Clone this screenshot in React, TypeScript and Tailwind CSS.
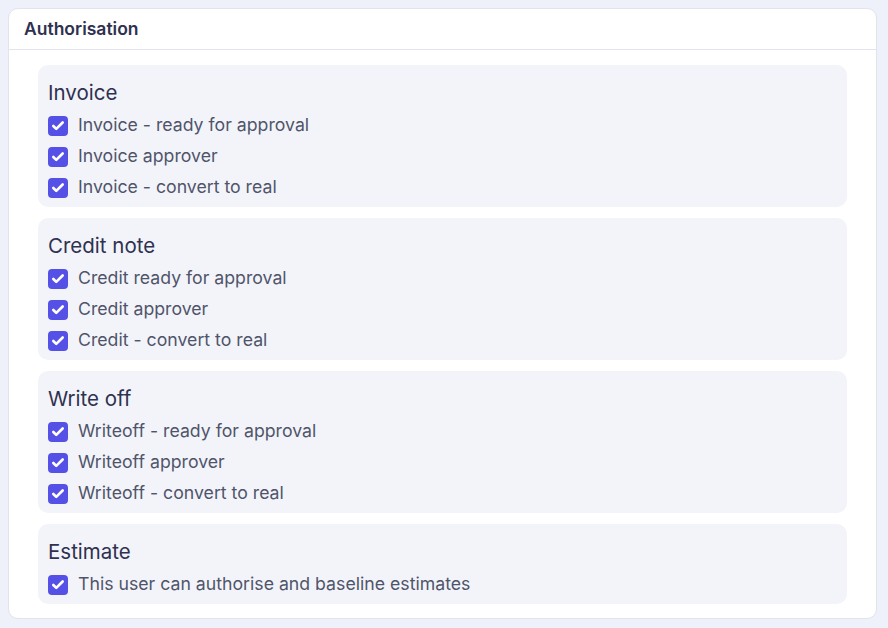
import { Check } from 'lucide-react';

type Group = { title: string; items: string[] };

const groups: Group[] = [
  {
    title: 'Invoice',
    items: ['Invoice - ready for approval', 'Invoice approver', 'Invoice - convert to real'],
  },
  {
    title: 'Credit note',
    items: ['Credit ready for approval', 'Credit approver', 'Credit - convert to real'],
  },
  {
    title: 'Write off',
    items: ['Writeoff - ready for approval', 'Writeoff approver', 'Writeoff - convert to real'],
  },
  {
    title: 'Estimate',
    items: ['This user can authorise and baseline estimates'],
  },
];

function Checkbox() {
  return (
    <span className="flex h-5 w-5 shrink-0 items-center justify-center rounded-[4px] bg-[#5550e6]">
      <Check className="h-[14px] w-[14px] text-white" strokeWidth={4.5} />
    </span>
  );
}

export default function App() {
  return (
    <div
      className="min-h-screen bg-[#eef0fa] pt-2 pr-[11px] pb-2 pl-2"
      style={{ fontFamily: 'Inter, "Noto Sans", sans-serif' }}
    >
      <div className="overflow-hidden rounded-[10px] border border-[#e2e4ec] bg-white">
        {/* Cabecera */}
        <div className="flex h-[41px] items-center border-b border-[#e2e4ec] px-[15px]">
          <h2 className="text-[17.5px] font-semibold text-[#2e3150]">Authorisation</h2>
        </div>

        {/* Grupos */}
        <div className="flex flex-col gap-[11px] px-[29px] pt-[15px] pb-[14px]">
          {groups.map((g) => (
            <section key={g.title} className="rounded-[10px] bg-[#f3f4fa] px-[10px] pt-[14px] pb-[4px]">
              <h3 className="mb-[3px] text-[20.5px] leading-7 text-[#2e3150]">{g.title}</h3>
              {g.items.map((item) => (
                <label key={item} className="flex h-[31px] items-center gap-[10px]">
                  <Checkbox />
                  <span className="text-[17.7px] text-[#50546a]">{item}</span>
                </label>
              ))}
            </section>
          ))}
        </div>
      </div>
    </div>
  );
}
